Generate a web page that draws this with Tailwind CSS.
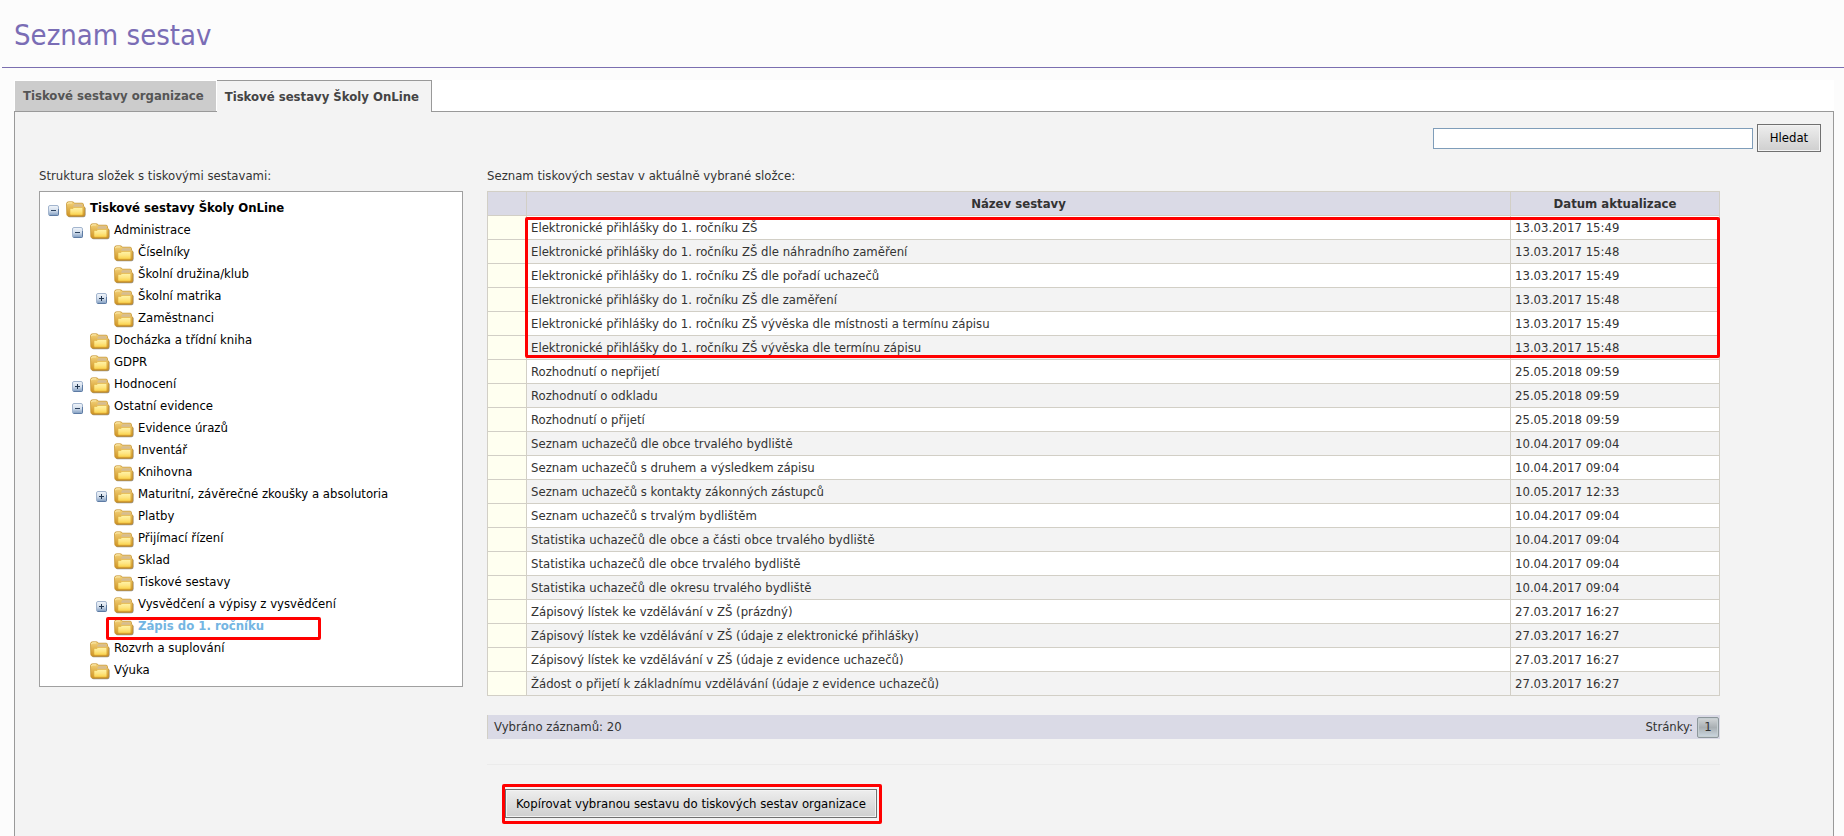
<!DOCTYPE html>
<html lang="cs">
<head>
<meta charset="utf-8">
<title>Seznam sestav</title>
<script src="https://cdn.jsdelivr.net/npm/@tailwindcss/browser@4"></script>
</head>
<body class="flex min-h-screen flex-col bg-[#fcfcfc] font-['DejaVu_Sans_Condensed','DejaVu_Sans',sans-serif] text-[13px] leading-4 text-[#333]">
<svg class="absolute size-0" aria-hidden="true">
  <defs>
    <linearGradient id="gBack" x1="0" y1="0" x2="0" y2="1"><stop offset="0" stop-color="#f3d27a"/><stop offset="1" stop-color="#cf9322"/></linearGradient>
    <linearGradient id="gFront" x1="0" y1="0" x2="0" y2="1"><stop offset="0" stop-color="#fff3a8"/><stop offset=".5" stop-color="#fee684"/><stop offset="1" stop-color="#fbd24a"/></linearGradient>
    <linearGradient id="gBox" x1="0" y1="0" x2="0" y2="1"><stop offset="0" stop-color="#f2f6fb"/><stop offset=".5" stop-color="#d3deec"/><stop offset="1" stop-color="#7f9cc0"/></linearGradient>
    <symbol id="folder" viewBox="0 0 20 17">
      <path d="M2 14.500v.8q.3 1 1.500 1h14q2 0 2-2V7l-1-.8z" fill="#77726a" opacity=".75"/>
      <path d="M.5 3Q.5.8 2.500.8h4q1.200 0 1.800 1.400h7.700q1.500 0 1.500 1.500v1.500q1.300.3 1.300 2v6.300q0 1.800-1.800 1.800H2.800q-1.800 0-2-1.800z" fill="url(#gBack)" stroke="#c08c26" stroke-width=".7"/>
      <path d="M7.500 5.200V4.500q.3-1.300 1.500-1.300h6.300q1 0 1 1v1.600H7z" fill="#d6bd92"/>
      <path d="M1.500 3.200q.1-1.300 1.200-1.300h3.500" fill="none" stroke="#fff3bd" stroke-width=".9"/>
      <path d="M4 7.500h3l1-1h8q.8 0 .8 1v5.300q0 1.300-1.100 1.300H5q-1 0-1-1.100z" fill="url(#gFront)" stroke="#e0b445" stroke-width=".6"/>
    </symbol>
    <symbol id="minus" viewBox="0 0 11 11">
      <rect x=".5" y=".5" width="10" height="10" rx="1.500" fill="url(#gBox)" stroke="#a3b5ce"/>
      <path d="M1.500 10.500h8q1 0 1-1V4" fill="none" stroke="#5d7ba4"/>
      <path d="M3 5.500h5" stroke="#2c425f"/>
    </symbol>
    <symbol id="plus" viewBox="0 0 11 11">
      <rect x=".5" y=".5" width="10" height="10" rx="1.500" fill="url(#gBox)" stroke="#a3b5ce"/>
      <path d="M1.500 10.500h8q1 0 1-1V4" fill="none" stroke="#5d7ba4"/>
      <path d="M3 5.500h5M5.500 3v5" stroke="#22364f"/>
    </symbol>
  </defs>
</svg>

<header class="ml-0.5 border-b border-[#7b6fb0] pb-[14px] pl-3 pt-[17px]">
  <h1 class="text-[29px] leading-9 text-[#7a6db5]">Seznam sestav</h1>
</header>

<main class="ml-3.5 mr-2.5 mt-3 flex grow flex-col">
  <nav class="flex h-8 items-end border-b border-[#999] bg-white font-bold">
    <a href="#" class="ml-px mr-px flex h-[30px] items-center bg-[#ccc] pl-2 pr-3 text-[#555]">Tiskové sestavy organizace</a>
    <a href="#" aria-current="page" class="-mb-px flex h-8 items-center border-r border-t border-[#999] bg-[#f3f3f3] pl-2 pr-3 text-[#444]">Tiskové sestavy Školy OnLine</a>
  </nav>

  <section class="grow border-x border-[#999] bg-[#f3f3f3] pb-3 pl-6 pr-3 pt-3">
    <form class="flex items-center justify-end gap-1">
      <input type="text" aria-label="Hledat sestavu" class="h-[21px] w-80 border border-[#7f9db9] bg-white px-1">
      <button type="button" class="h-7 w-16 border border-[#707070] bg-linear-to-b from-[#eee] to-[#cfcfcf] text-black shadow-[inset_0_0_0_1px_#f3f3f3]">Hledat</button>
    </form>

    <div class="mt-4 flex items-start gap-6">
      <div class="w-[424px] shrink-0">
        <p class="mb-[7px]">Struktura složek s tiskovými sestavami:</p>
        <ul role="tree" class="relative border border-[#a0a0a0] bg-white py-[5px] pl-2 text-black [&_a]:ml-1 [&_li]:flex [&_li]:h-[22px] [&_li]:items-center">
          <li><svg class="mt-[5px] mr-[7px] size-[11px]"><use href="#minus"/></svg><svg class="mt-[3px] h-[17px] w-5"><use href="#folder"/></svg><a href="#" class="font-bold">Tiskové sestavy Školy OnLine</a></li>
          <li class="pl-6"><svg class="mt-[5px] mr-[7px] size-[11px]"><use href="#minus"/></svg><svg class="mt-[3px] h-[17px] w-5"><use href="#folder"/></svg><a href="#">Administrace</a></li>
          <li class="pl-[66px]"><svg class="mt-[3px] h-[17px] w-5"><use href="#folder"/></svg><a href="#">Číselníky</a></li>
          <li class="pl-[66px]"><svg class="mt-[3px] h-[17px] w-5"><use href="#folder"/></svg><a href="#">Školní družina/klub</a></li>
          <li class="pl-12"><svg class="mt-[5px] mr-[7px] size-[11px]"><use href="#plus"/></svg><svg class="mt-[3px] h-[17px] w-5"><use href="#folder"/></svg><a href="#">Školní matrika</a></li>
          <li class="pl-[66px]"><svg class="mt-[3px] h-[17px] w-5"><use href="#folder"/></svg><a href="#">Zaměstnanci</a></li>
          <li class="pl-[42px]"><svg class="mt-[3px] h-[17px] w-5"><use href="#folder"/></svg><a href="#">Docházka a třídní kniha</a></li>
          <li class="pl-[42px]"><svg class="mt-[3px] h-[17px] w-5"><use href="#folder"/></svg><a href="#">GDPR</a></li>
          <li class="pl-6"><svg class="mt-[5px] mr-[7px] size-[11px]"><use href="#plus"/></svg><svg class="mt-[3px] h-[17px] w-5"><use href="#folder"/></svg><a href="#">Hodnocení</a></li>
          <li class="pl-6"><svg class="mt-[5px] mr-[7px] size-[11px]"><use href="#minus"/></svg><svg class="mt-[3px] h-[17px] w-5"><use href="#folder"/></svg><a href="#">Ostatní evidence</a></li>
          <li class="pl-[66px]"><svg class="mt-[3px] h-[17px] w-5"><use href="#folder"/></svg><a href="#">Evidence úrazů</a></li>
          <li class="pl-[66px]"><svg class="mt-[3px] h-[17px] w-5"><use href="#folder"/></svg><a href="#">Inventář</a></li>
          <li class="pl-[66px]"><svg class="mt-[3px] h-[17px] w-5"><use href="#folder"/></svg><a href="#">Knihovna</a></li>
          <li class="pl-12"><svg class="mt-[5px] mr-[7px] size-[11px]"><use href="#plus"/></svg><svg class="mt-[3px] h-[17px] w-5"><use href="#folder"/></svg><a href="#">Maturitní, závěrečné zkoušky a absolutoria</a></li>
          <li class="pl-[66px]"><svg class="mt-[3px] h-[17px] w-5"><use href="#folder"/></svg><a href="#">Platby</a></li>
          <li class="pl-[66px]"><svg class="mt-[3px] h-[17px] w-5"><use href="#folder"/></svg><a href="#">Přijímací řízení</a></li>
          <li class="pl-[66px]"><svg class="mt-[3px] h-[17px] w-5"><use href="#folder"/></svg><a href="#">Sklad</a></li>
          <li class="pl-[66px]"><svg class="mt-[3px] h-[17px] w-5"><use href="#folder"/></svg><a href="#">Tiskové sestavy</a></li>
          <li class="pl-12"><svg class="mt-[5px] mr-[7px] size-[11px]"><use href="#plus"/></svg><svg class="mt-[3px] h-[17px] w-5"><use href="#folder"/></svg><a href="#">Vysvědčení a výpisy z vysvědčení</a></li>
          <li class="relative pl-[66px]"><svg class="mt-[3px] h-[17px] w-5"><use href="#folder"/></svg><a href="#" class="font-bold text-[#74b5e2]">Zápis do 1. ročníku</a><span class="pointer-events-none absolute left-[58px] top-[2px] h-[23px] w-[215px] rounded-xs border-3 border-[#f00]"></span></li>
          <li class="pl-[42px]"><svg class="mt-[3px] h-[17px] w-5"><use href="#folder"/></svg><a href="#">Rozvrh a suplování</a></li>
          <li class="pl-[42px]"><svg class="mt-[3px] h-[17px] w-5"><use href="#folder"/></svg><a href="#">Výuka</a></li>
        </ul>
      </div>

      <div class="mr-[101px] min-w-0 grow">
        <p class="mb-[7px]">Seznam tiskových sestav v aktuálně vybrané složce:</p>
        <div class="relative">
          <table class="w-full table-fixed border-collapse [&_td]:h-6 [&_td]:border [&_td]:border-[#d2cfc6] [&_td]:px-1 [&_td]:py-0 [&_td:first-child]:bg-[#fffff0] [&_th]:h-6 [&_th]:border [&_th]:border-[#d2cfc6] [&_th]:bg-[#dadae6] [&_th]:p-0">
            <colgroup><col class="w-[39px]"><col><col class="w-[209px]"></colgroup>
            <thead><tr><th></th><th scope="col">Název sestavy</th><th scope="col">Datum aktualizace</th></tr></thead>
            <tbody class="[&_tr:nth-child(odd)]:bg-white">
              <tr><td></td><td>Elektronické přihlášky do 1. ročníku ZŠ</td><td>13.03.2017 15:49</td></tr>
              <tr><td></td><td>Elektronické přihlášky do 1. ročníku ZŠ dle náhradního zaměření</td><td>13.03.2017 15:48</td></tr>
              <tr><td></td><td>Elektronické přihlášky do 1. ročníku ZŠ dle pořadí uchazečů</td><td>13.03.2017 15:49</td></tr>
              <tr><td></td><td>Elektronické přihlášky do 1. ročníku ZŠ dle zaměření</td><td>13.03.2017 15:48</td></tr>
              <tr><td></td><td>Elektronické přihlášky do 1. ročníku ZŠ vývěska dle místnosti a termínu zápisu</td><td>13.03.2017 15:49</td></tr>
              <tr><td></td><td>Elektronické přihlášky do 1. ročníku ZŠ vývěska dle termínu zápisu</td><td>13.03.2017 15:48</td></tr>
              <tr><td></td><td>Rozhodnutí o nepřijetí</td><td>25.05.2018 09:59</td></tr>
              <tr><td></td><td>Rozhodnutí o odkladu</td><td>25.05.2018 09:59</td></tr>
              <tr><td></td><td>Rozhodnutí o přijetí</td><td>25.05.2018 09:59</td></tr>
              <tr><td></td><td>Seznam uchazečů dle obce trvalého bydliště</td><td>10.04.2017 09:04</td></tr>
              <tr><td></td><td>Seznam uchazečů s druhem a výsledkem zápisu</td><td>10.04.2017 09:04</td></tr>
              <tr><td></td><td>Seznam uchazečů s kontakty zákonných zástupců</td><td>10.05.2017 12:33</td></tr>
              <tr><td></td><td>Seznam uchazečů s trvalým bydlištěm</td><td>10.04.2017 09:04</td></tr>
              <tr><td></td><td>Statistika uchazečů dle obce a části obce trvalého bydliště</td><td>10.04.2017 09:04</td></tr>
              <tr><td></td><td>Statistika uchazečů dle obce trvalého bydliště</td><td>10.04.2017 09:04</td></tr>
              <tr><td></td><td>Statistika uchazečů dle okresu trvalého bydliště</td><td>10.04.2017 09:04</td></tr>
              <tr><td></td><td>Zápisový lístek ke vzdělávání v ZŠ (prázdný)</td><td>27.03.2017 16:27</td></tr>
              <tr><td></td><td>Zápisový lístek ke vzdělávání v ZŠ (údaje z elektronické přihlášky)</td><td>27.03.2017 16:27</td></tr>
              <tr><td></td><td>Zápisový lístek ke vzdělávání v ZŠ (údaje z evidence uchazečů)</td><td>27.03.2017 16:27</td></tr>
              <tr><td></td><td>Žádost o přijetí k základnímu vzdělávání (údaje z evidence uchazečů)</td><td>27.03.2017 16:27</td></tr>
            </tbody>
          </table>
          <span class="pointer-events-none absolute left-[38px] right-0 top-[26px] h-[141px] rounded-xs border-3 border-[#f00]"></span>
        </div>

        <div class="mt-[19px] flex h-6 items-center justify-between border-l border-[#d2cfc6] bg-[#dadae6] pl-1.5 pr-px">
          <span>Vybráno záznamů: 20</span>
          <span class="flex items-center gap-1">Stránky: <button type="button" class="h-[21px] w-[22px] rounded-xs border border-[#8d979b] bg-linear-to-b from-[#d2d6d8] via-[#a9afb3] to-[#cbd7e0] shadow-[inset_0_0_0_1px_#c6ced2]">1</button></span>
        </div>
        <hr class="mt-[25px] border-[#ebebeb]">
        <div class="ml-[15px] mt-[19px] inline-block rounded-xs border-3 border-[#f00] pb-[3px] pr-0.5 pt-0.5">
          <button type="button" class="h-[29px] w-[372px] border border-[#707070] bg-linear-to-b from-[#eee] to-[#cfcfcf] text-black shadow-[inset_0_0_0_1px_#f3f3f3]">Kopírovat vybranou sestavu do tiskových sestav organizace</button>
        </div>
      </div>
    </div>
  </section>
</main>
</body>
</html>
